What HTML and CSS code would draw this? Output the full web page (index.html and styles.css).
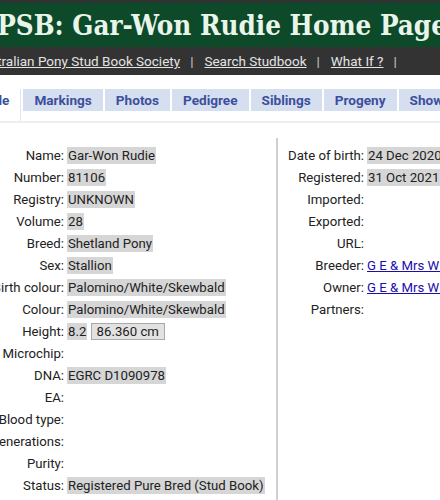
FILE: index.html
```html
<!DOCTYPE html>
<html>
<head>
<meta charset="utf-8">
<title>APSB: Gar-Won Rudie Home Page</title>
<link rel="stylesheet" href="styles.css">
</head>
<body>
<div id="page">
<div id="header">
<span class="main">APSB: Gar-Won Rudie Home Page</span>
</div>
<div id="nav">
<a href="#">Australian Pony Stud Book Society</a><span class="sep">|</span><a href="#">Search Studbook</a><span class="sep">|</span><a href="#">What If ?</a><span class="sep">|</span>
</div>
<div id="tabs">
<span class="tab active">Profile</span>
<span class="tab">Markings</span>
<span class="tab">Photos</span>
<span class="tab">Pedigree</span>
<span class="tab">Siblings</span>
<span class="tab">Progeny</span>
<span class="tab">Show Results</span>
</div>
<div id="profile">
<div class="col left">
<span class="lbl">Name:</span><span><span class="val">Gar-Won Rudie</span></span>
<span class="lbl">Number:</span><span><span class="val">81106</span></span>
<span class="lbl">Registry:</span><span><span class="val">UNKNOWN</span></span>
<span class="lbl">Volume:</span><span><span class="val">28</span></span>
<span class="lbl">Breed:</span><span><span class="val">Shetland Pony</span></span>
<span class="lbl">Sex:</span><span><span class="val">Stallion</span></span>
<span class="lbl">Birth colour:</span><span><span class="val">Palomino/White/Skewbald</span></span>
<span class="lbl">Colour:</span><span><span class="val">Palomino/White/Skewbald</span></span>
<span class="lbl">Height:</span><span><span class="val">8.2</span> <span class="cm">86.360 cm</span></span>
<span class="lbl">Microchip:</span><span></span>
<span class="lbl">DNA:</span><span><span class="val">EGRC D1090978</span></span>
<span class="lbl">EA:</span><span></span>
<span class="lbl">Blood type:</span><span></span>
<span class="lbl">Generations:</span><span></span>
<span class="lbl">Purity:</span><span></span>
<span class="lbl">Status:</span><span><span class="val">Registered Pure Bred (Stud Book)</span></span>
</div>
<div class="col right">
<span class="lbl">Date of birth:</span><span><span class="val">24 Dec 2020</span></span>
<span class="lbl">Registered:</span><span><span class="val">31 Oct 2021</span></span>
<span class="lbl">Imported:</span><span></span>
<span class="lbl">Exported:</span><span></span>
<span class="lbl">URL:</span><span></span>
<span class="lbl">Breeder:</span><span><a href="#">G E &amp; Mrs W Smith</a></span>
<span class="lbl">Owner:</span><span><a href="#">G E &amp; Mrs W Smith</a></span>
<span class="lbl">Partners:</span><span></span>
</div>
</div>
</div>
</body>
</html>
```
FILE: styles.css
```css
html, body
{
	margin: 0;
	padding: 0;
	background-color: #fff;
	overflow: hidden;
}
#page
{
	width: 620px;
	margin-left: -22px;
	font-family: Roboto, "Liberation Sans", sans-serif;
}
#header
{
	background-color: #0c4a29;
	border-top: 3px solid #2f3332;
	height: 44px;
	white-space: nowrap;
}
.main
{
	display: block;
	color: #e9f5ea;
	font-family: "DejaVu Serif", serif;
	font-stretch: condensed;
	font-size: 27.5px;
	font-weight: bold;
	line-height: 44px;
	padding-left: 0;
}
#nav
{
	background-color: #333;
	height: 28px;
	line-height: 29px;
	font-size: 13.5px;
	white-space: nowrap;
	margin-left: -4px;
}
#nav a
{
	color: #e4e4e4;
}
#nav .sep
{
	color: #ccc;
	margin: 0 11px 0 10px;
}
#tabs
{
	margin-top: 14px;
	margin-left: -20px;
	border-bottom: 2px solid #eceef0;
	white-space: nowrap;
	display: flex;
	gap: 2px;
	height: 32px;
}
.tab
{
	display: block;
	height: 22px;
	line-height: 22px;
	padding: 0 11px 0 11px;
	background-color: #d6dff0;
	color: #3c4f9c;
	font-size: 13.6px;
	font-weight: bold;
}
.tab.active
{
	background-color: #fff;
	height: 32px;
	border-right: 1px solid #e4e6ea;
}
#profile
{
	display: flex;
	margin-top: 18px;
	font-size: 13.2px;
	color: #222;
}
.col
{
	display: grid;
	grid-auto-rows: 22px;
	column-gap: 3px;
	align-items: center;
	align-content: start;
	white-space: nowrap;
}
.left
{
	grid-template-columns: 86px 200px;
	width: 298px;
	padding-top: 3px;
}
.right
{
	grid-template-columns: 86px auto;
	border-left: 2px solid #d0d0d0;
	padding-top: 6px;
	margin-top: -3px;
	height: 400px;
}
.lbl
{
	text-align: right;
}
.val
{
	background-color: #d6d6d6;
	padding: 1px 1px;
}
.cm
{
	border: 1px solid #aaa;
	background-color: #e2e2e2;
	padding: 0 5px;
}
.right a
{
	color: #1a0dab;
}
```
